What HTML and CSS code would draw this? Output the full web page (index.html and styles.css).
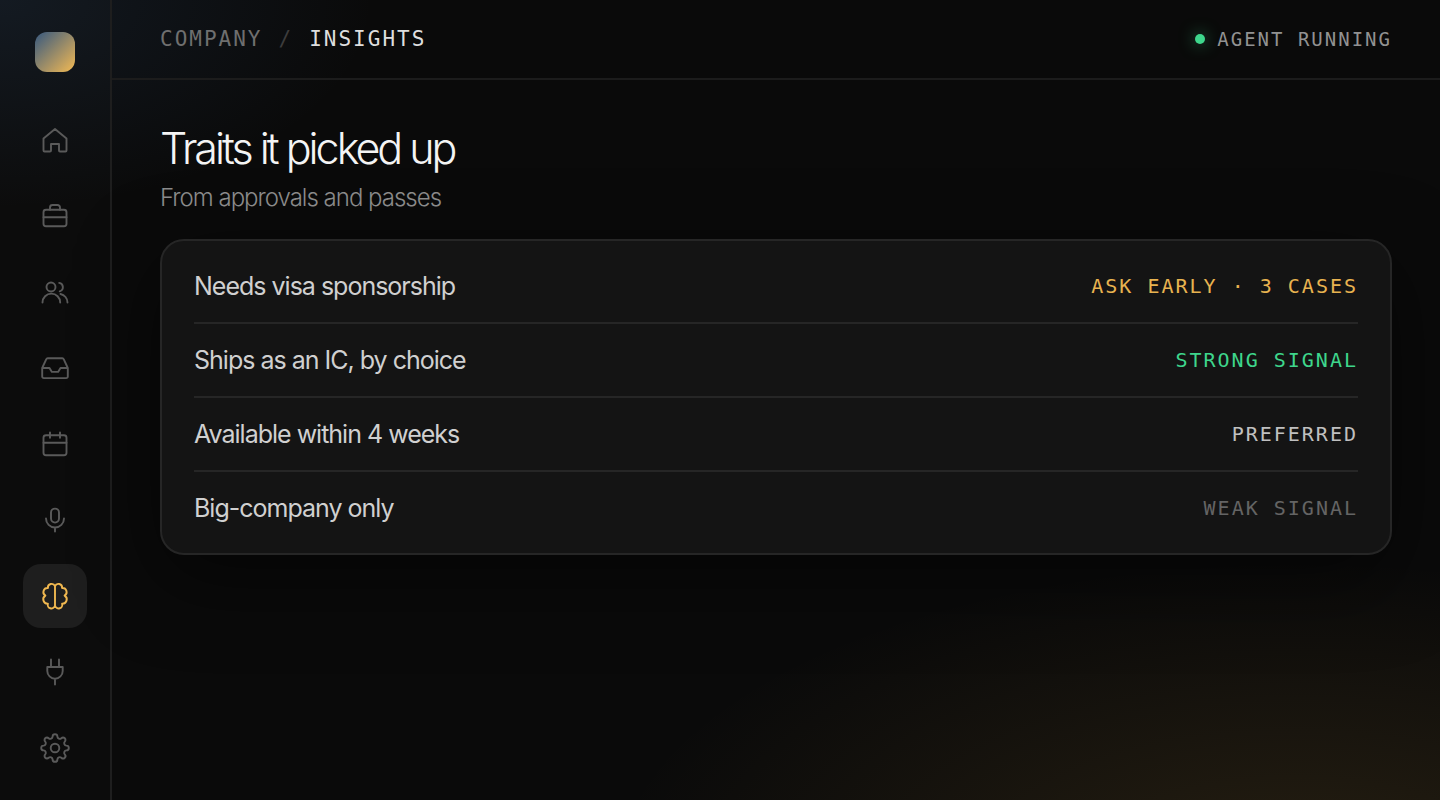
FILE: index.html
```html
<!DOCTYPE html>
<html lang="en">
<head>
<meta charset="utf-8">
<title>Insights</title>
<link rel="stylesheet" href="styles.css">
</head>
<body>
<div class="app">
  <aside class="sidebar">
    <div class="logo"></div>
    <nav class="nav" aria-label="Main">
      <a class="nav-item" href="#" aria-label="Home"><svg class="icon" viewBox="0 0 32 32"><path d="M16 5 4.500 14.500V26.500a1 1 0 0 0 1 1H11a1 1 0 0 0 1-1V20h8v6.500a1 1 0 0 0 1 1h5.500a1 1 0 0 0 1-1V14.500Z"/></svg></a>
      <a class="nav-item" href="#" aria-label="Jobs"><svg class="icon" viewBox="0 0 32 32"><rect x="4.500" y="9.700" width="23" height="16.500" rx="2.500"/><path d="M11 9.700V7.500A2.500 2.500 0 0 1 13.500 5h5A2.500 2.500 0 0 1 21 7.500v2.200M4.500 17.300h23"/></svg></a>
      <a class="nav-item" href="#" aria-label="People"><svg class="icon" viewBox="0 0 32 32"><circle cx="12" cy="11" r="4.500"/><path d="M3.500 26.500a8.700 8.700 0 0 1 17.700 0M20.200 6.900a4.300 4.300 0 0 1 .5 8.400M21.500 18a8.700 8.700 0 0 1 7 8.500"/></svg></a>
      <a class="nav-item" href="#" aria-label="Inbox"><svg class="icon" viewBox="0 0 32 32"><path d="M3.200 16 7.300 7.200a1.600 1.600 0 0 1 1.400-1h14.600a1.600 1.600 0 0 1 1.400 1L28.800 16v8.500a1.600 1.600 0 0 1-1.600 1.600H4.800a1.600 1.600 0 0 1-1.600-1.600ZM3.200 16h7.300l2.400 3.900h6.200l2.400-3.900h7.300"/></svg></a>
      <a class="nav-item" href="#" aria-label="Calendar"><svg class="icon" viewBox="0 0 32 32"><rect x="4.500" y="7.200" width="23" height="20" rx="2.500"/><path d="M4.500 14.700h23M11 4.500v5.200M21 4.500v5.200"/></svg></a>
      <a class="nav-item" href="#" aria-label="Interviews"><svg class="icon" viewBox="0 0 32 32"><rect x="12" y="4.600" width="8" height="14" rx="4"/><path d="M7 14.500a9 9 0 0 0 18 0M16 23.500v4"/></svg></a>
      <a class="nav-item nav-item-active" href="#" aria-label="Insights" aria-current="page"><svg class="icon" viewBox="0 0 32 32"><path d="M16 6.200A3.700 3.700 0 0 0 8.900 8 4.100 4.100 0 0 0 6.400 15.600 4.300 4.300 0 0 0 8.900 23.600 3.700 3.700 0 0 0 16 25.800 3.700 3.700 0 0 0 23.100 23.600 4.300 4.300 0 0 0 25.600 15.600 4.100 4.100 0 0 0 23.100 8 3.700 3.700 0 0 0 16 6.200V25.800"/></svg></a>
      <a class="nav-item" href="#" aria-label="Integrations"><svg class="icon" viewBox="0 0 32 32"><path d="M12 3.500V11M20 3.500V11M8.300 11h15.400v4a7.700 7.700 0 0 1-15.400 0ZM16 22.700V28.500"/></svg></a>
      <a class="nav-item" href="#" aria-label="Settings"><svg class="icon" viewBox="0 0 32 32"><circle cx="16" cy="16" r="4.300"/><path d="M13.600 4.600A2.400 2.400 0 0 1 18.400 4.600 2.400 2.400 0 0 0 22.360 6.240 2.400 2.400 0 0 1 25.760 9.640 2.400 2.400 0 0 0 27.400 13.600 2.400 2.400 0 0 1 27.400 18.400 2.400 2.400 0 0 0 25.760 22.360 2.400 2.400 0 0 1 22.360 25.760 2.400 2.400 0 0 0 18.400 27.400 2.400 2.400 0 0 1 13.600 27.400 2.400 2.400 0 0 0 9.640 25.760 2.400 2.400 0 0 1 6.240 22.360 2.400 2.400 0 0 0 4.600 18.400 2.400 2.400 0 0 1 4.600 13.600 2.400 2.400 0 0 0 6.240 9.640 2.400 2.400 0 0 1 9.640 6.240 2.400 2.400 0 0 0 13.600 4.600Z"/></svg></a>
    </nav>
  </aside>
  <div class="main">
    <header class="topbar">
      <nav class="crumbs" aria-label="Breadcrumb"><a class="crumb" href="#">COMPANY</a><span class="crumb-sep">/</span><span class="crumb-current">INSIGHTS</span></nav>
      <div class="status"><span class="status-dot"></span>AGENT RUNNING</div>
    </header>
    <main class="content">
      <h1 class="title">Traits it picked up</h1>
      <p class="subtitle">From approvals and passes</p>
      <ul class="card">
        <li class="trait"><span class="trait-name">Needs visa sponsorship</span><span class="tag tag-warn">ASK EARLY · 3 CASES</span></li>
        <li class="trait"><span class="trait-name">Ships as an IC, by choice</span><span class="tag tag-good">STRONG SIGNAL</span></li>
        <li class="trait"><span class="trait-name">Available within 4 weeks</span><span class="tag">PREFERRED</span></li>
        <li class="trait"><span class="trait-name">Big-company only</span><span class="tag tag-weak">WEAK SIGNAL</span></li>
      </ul>
    </main>
  </div>
</div>
</body>
</html>
```
FILE: styles.css
```css
* { box-sizing: border-box; }
body {
  margin: 0;
  font-family: Inter, "Liberation Sans", sans-serif;
  color: #d0d0d0;
  background: #0a0a0a;
}
.app {
  display: flex;
  min-height: 100vh;
  background:
    radial-gradient(ellipse 60% 50% at 90% 110%, rgba(240, 180, 70, 0.12), transparent 80%),
    radial-gradient(ellipse 26% 26% at 0% 0%, rgba(70, 120, 180, 0.13), transparent),
    #0a0a0a;
}
.sidebar {
  display: flex;
  flex-direction: column;
  align-items: center;
  gap: 36px;
  flex: none;
  width: 112px;
  padding: 32px 0 20px;
  background: rgba(255, 255, 255, 0.01);
  border-right: 2px solid #1e1e1e;
}
.logo {
  width: 40px;
  height: 40px;
  border-radius: 12px;
  background: linear-gradient(135deg, #36587f, #e0b058 90%);
}
.nav { display: flex; flex-direction: column; gap: 12px; }
.nav-item {
  display: grid;
  place-items: center;
  width: 64px;
  height: 64px;
  border-radius: 18px;
  color: #5a5a5a;
}
.nav-item-active { color: #f0b850; background: #1e1e1e; }
.icon {
  width: 32px;
  height: 32px;
  fill: none;
  stroke: currentColor;
  stroke-width: 1.9;
  stroke-linecap: round;
  stroke-linejoin: round;
}
.main { flex: 1; min-width: 0; }
.topbar {
  display: flex;
  align-items: center;
  justify-content: space-between;
  height: 80px;
  padding: 0 48px;
  border-bottom: 2px solid #1c1c1c;
  font-family: "DejaVu Sans Mono", monospace;
}
.crumbs { display: flex; gap: 16px; font-size: 21px; letter-spacing: 2px; }
.crumb { color: #6f6f6f; text-decoration: none; }
.crumb-sep { color: #3c3c3c; }
.crumb-current { color: #dedede; }
.status {
  display: flex;
  align-items: center;
  gap: 12px;
  font-size: 19px;
  letter-spacing: 2px;
  color: #929292;
}
.status-dot {
  width: 10px;
  height: 10px;
  border-radius: 50%;
  background: #3ed68c;
  box-shadow: 0 0 16px rgba(62, 214, 140, 0.6);
}
.content { padding: 40px 48px; }
.title {
  margin: 0;
  font-size: 43px;
  line-height: 56px;
  font-weight: 300;
  letter-spacing: -3px;
  color: #f4f4f4;
}
.subtitle {
  margin: 6px 0 0;
  font-size: 24px;
  line-height: 32px;
  font-weight: 300;
  letter-spacing: -1px;
  color: #8a8a8a;
}
.card {
  margin: 25px 0 0;
  padding: 9px 32px;
  list-style: none;
  background: #141414;
  border: 2px solid #262626;
  border-radius: 24px;
  box-shadow: 0 24px 80px rgba(0, 0, 0, 0.5);
}
.trait {
  display: flex;
  align-items: center;
  justify-content: space-between;
  gap: 24px;
  padding: 18px 0;
  line-height: 36px;
}
.trait + .trait { border-top: 2px solid #262626; }
.trait-name { font-size: 25px; letter-spacing: -1px; color: #d0d0d0; }
.tag {
  font-family: "DejaVu Sans Mono", monospace;
  font-size: 20px;
  letter-spacing: 2px;
  color: #c0c0c0;
}
.tag-warn { color: #e8b350; }
.tag-good { color: #3ed68c; }
.tag-weak { color: #646464; }
```
